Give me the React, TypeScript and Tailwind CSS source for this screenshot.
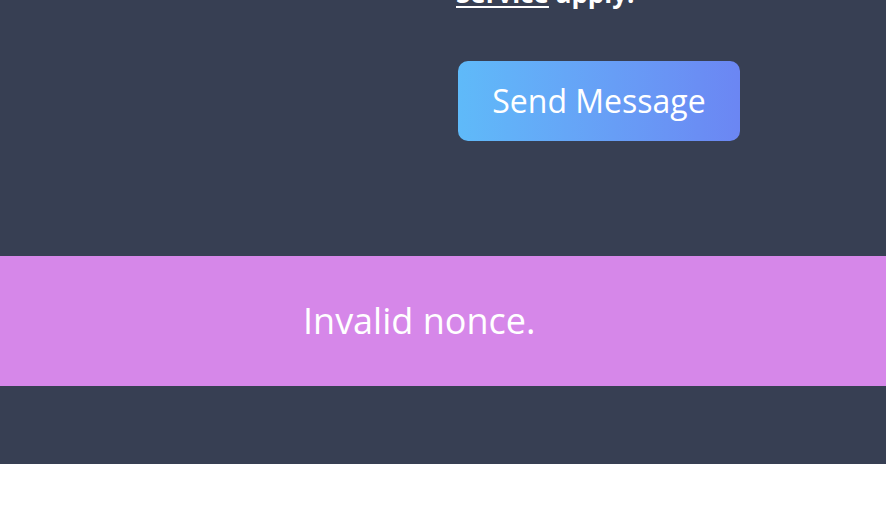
export default function App() {
  return (
    <div className="w-[886px] h-[528px] overflow-hidden bg-white" style={{ fontFamily: '"Open Sans", "Noto Sans", sans-serif' }}>
      <div className="bg-[#373f53] h-[464px] flex flex-col">
        <div className="pl-[456px] h-[256px] flex flex-col">
          <p className="-mt-[23px] text-[26px] leading-[32px] font-bold text-white">
            <span className="underline underline-offset-[3px] decoration-2">Service</span> apply.
          </p>
          <button className="mt-[52px] ml-[2px] w-[282px] h-[80px] rounded-[10px] bg-gradient-to-r from-[#5fbaf9] to-[#6b86f3] text-white text-[32px] flex items-center justify-center">
            Send Message
          </button>
        </div>
        <div className="bg-[#d687e9] h-[130px] flex items-center pl-[303px]">
          <span className="text-white text-[36px]">Invalid nonce.</span>
        </div>
      </div>
    </div>
  );
}
